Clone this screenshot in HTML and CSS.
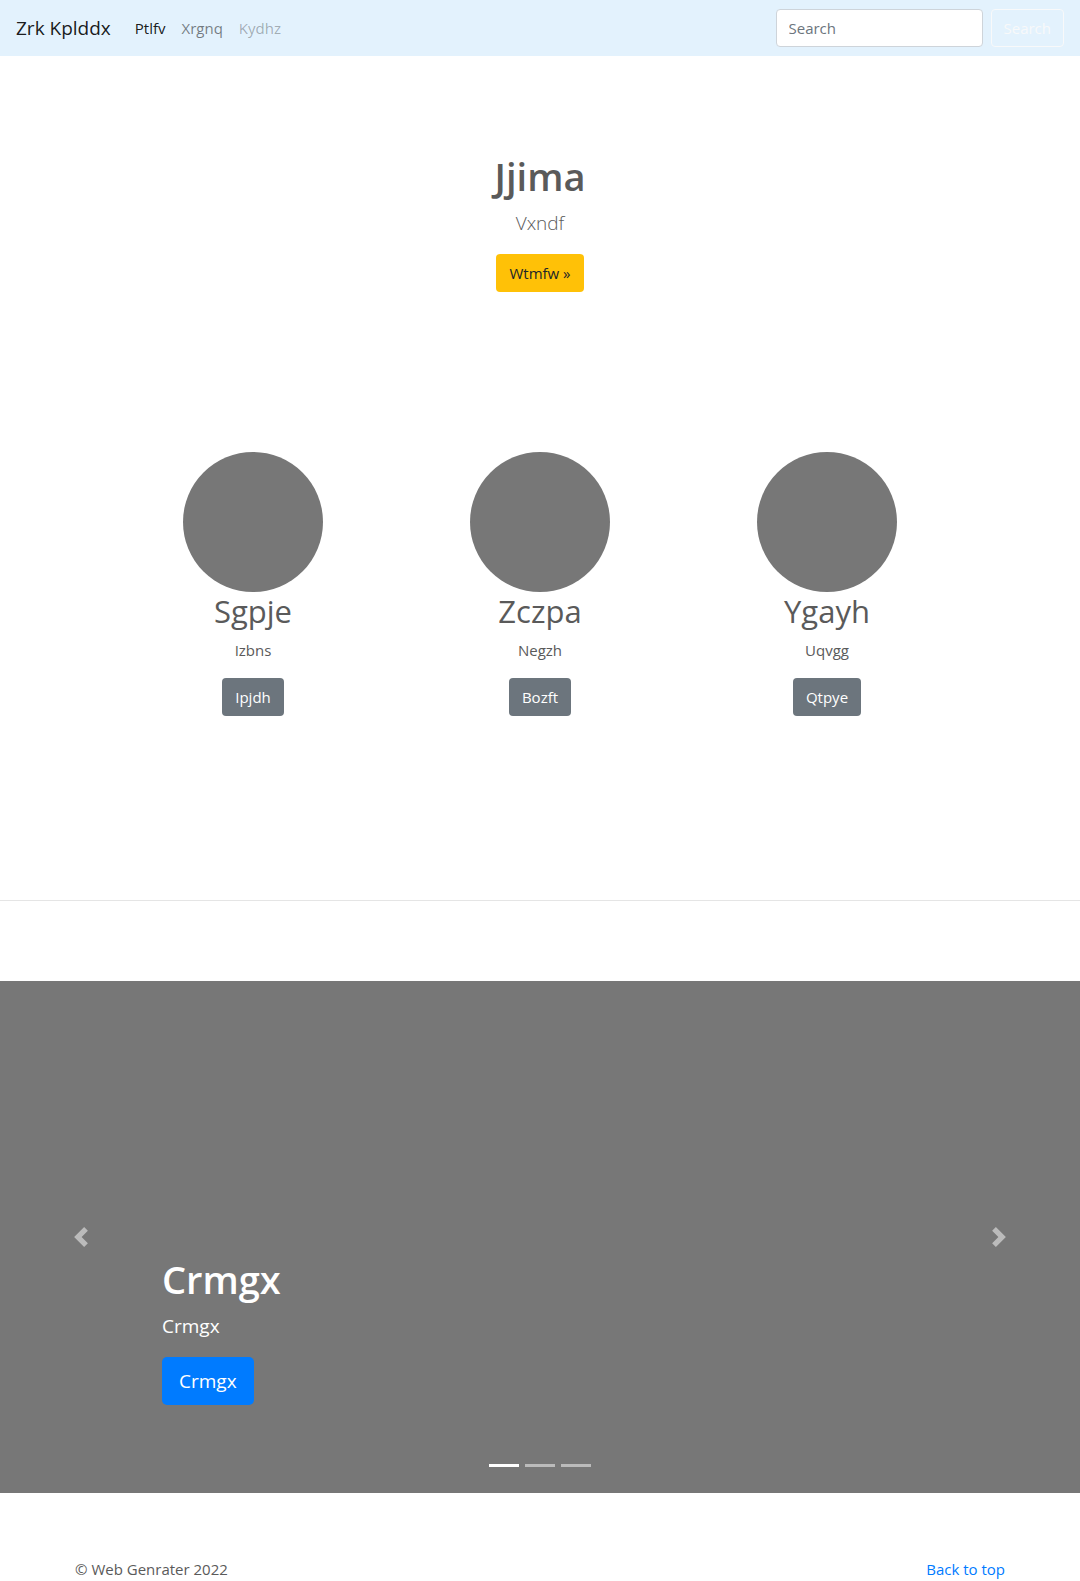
FILE: index.html
```html
<!DOCTYPE html>
<html lang="en">
<head>
<meta charset="utf-8">
<meta name="viewport" content="width=device-width, initial-scale=1">
<title>Zrk Kplddx</title>
<link rel="stylesheet" href="styles.css">
</head>
<body>
<header class="navbar">
  <a class="brand" href="#">Zrk Kplddx</a>
  <nav class="nav-links">
    <a class="nav-link active" href="#">Ptlfv</a>
    <a class="nav-link" href="#">Xrgnq</a>
    <a class="nav-link disabled" href="#">Kydhz</a>
  </nav>
  <form class="search">
    <input class="search-input" type="search" placeholder="Search" aria-label="Search">
    <button class="btn btn-outline" type="button">Search</button>
  </form>
</header>
<main>
  <section class="hero">
    <h1 class="title">Jjima</h1>
    <p class="lead light">Vxndf</p>
    <a class="btn btn-warning" href="#">Wtmfw »</a>
  </section>
  <section class="features">
    <article class="feature">
      <div class="avatar"></div>
      <h2 class="feature-title">Sgpje</h2>
      <p class="feature-text">Izbns</p>
      <a class="btn btn-secondary" href="#">Ipjdh</a>
    </article>
    <article class="feature">
      <div class="avatar"></div>
      <h2 class="feature-title">Zczpa</h2>
      <p class="feature-text">Negzh</p>
      <a class="btn btn-secondary" href="#">Bozft</a>
    </article>
    <article class="feature">
      <div class="avatar"></div>
      <h2 class="feature-title">Ygayh</h2>
      <p class="feature-text">Uqvgg</p>
      <a class="btn btn-secondary" href="#">Qtpye</a>
    </article>
  </section>
  <hr class="divider">
  <section class="carousel">
    <button class="arrow" type="button" aria-label="Previous">
      <svg width="20" height="20" viewBox="0 0 8 8" fill="#fff"><path d="M5.25 0l-4 4 4 4 1.5-1.5L4.25 4l2.5-2.5L5.25 0z"/></svg>
    </button>
    <div class="caption">
      <h1 class="title">Crmgx</h1>
      <p class="lead">Crmgx</p>
      <a class="btn btn-primary" href="#">Crmgx</a>
    </div>
    <button class="arrow" type="button" aria-label="Next">
      <svg width="20" height="20" viewBox="0 0 8 8" fill="#fff"><path d="M2.75 0l-1.5 1.5L3.75 4l-2.5 2.5L2.75 8l4-4-4-4z"/></svg>
    </button>
    <div class="indicators">
      <button class="indicator current" type="button" aria-label="Slide 1"></button>
      <button class="indicator" type="button" aria-label="Slide 2"></button>
      <button class="indicator" type="button" aria-label="Slide 3"></button>
    </div>
  </section>
</main>
<footer class="footer">
  <span>© Web Genrater 2022</span>
  <a class="top-link" href="#">Back to top</a>
</footer>
</body>
</html>
```
FILE: styles.css
```css
*, *::before, *::after { box-sizing: border-box; }

body {
  margin: 0;
  font-family: "Open Sans", "Noto Sans", sans-serif;
  font-size: 15px;
  line-height: 24px;
  color: #5a5a5a;
  background: #fff;
}

h1, h2, p { margin: 0; }
a { text-decoration: none; }

.navbar {
  display: flex;
  align-items: center;
  min-height: 56px;
  padding: 8px 16px;
  background: #e3f2fd;
}
.brand {
  margin-right: 16px;
  font-size: 19px;
  line-height: 30px;
  color: rgba(0, 0, 0, .9);
}
.nav-links { display: flex; flex: 1; }
.nav-link { padding: 8px; color: rgba(0, 0, 0, .5); }
.nav-link.active { color: rgba(0, 0, 0, .9); }
.nav-link.disabled { color: rgba(0, 0, 0, .3); }
.search { display: flex; gap: 8px; }
.search-input {
  width: 207px;
  height: 38px;
  padding: 6px 12px;
  border: 1px solid #ced4da;
  border-radius: 4px;
  background: #fff;
  font: inherit;
  color: #495057;
}
.search-input::placeholder { color: #6c757d; opacity: 1; }

.btn {
  display: inline-block;
  padding: 6px 12px;
  border: 1px solid transparent;
  border-radius: 4px;
  font: inherit;
  text-align: center;
}
.btn-outline { color: #f8f9fa; border-color: #f8f9fa; background: transparent; }
.btn-warning { color: #212529; background: #ffc107; }
.btn-secondary { color: #fff; background: #6c757d; }
.btn-primary {
  padding: 8px 16px;
  border-radius: 5px;
  font-size: 19px;
  line-height: 30px;
  color: #fff;
  background: #007bff;
}

.title {
  margin-bottom: 8px;
  font-size: 38px;
  font-weight: 600;
  line-height: 48px;
}
.lead { margin-bottom: 16px; font-size: 19px; line-height: 30px; }
.light { font-weight: 300; }

.hero { padding: 96px 16px 160px; text-align: center; }

.features {
  display: grid;
  grid-template-columns: repeat(3, 1fr);
  max-width: 861px;
  margin: 0 auto;
  text-align: center;
}
.avatar {
  width: 140px;
  height: 140px;
  margin: 0 auto;
  border-radius: 50%;
  background: #777;
}
.feature-title {
  margin-bottom: 8px;
  font-size: 31px;
  font-weight: 400;
  line-height: 38px;
}
.feature-text { margin-bottom: 16px; }

.divider {
  margin: 184px 0 80px;
  border: 0;
  border-top: 1px solid rgba(0, 0, 0, .1);
}

.carousel {
  position: relative;
  display: flex;
  min-height: 512px;
  color: #fff;
  background: #777;
}
.arrow {
  display: flex;
  align-items: center;
  justify-content: center;
  width: 15%;
  padding: 0;
  border: 0;
  background: none;
  opacity: .5;
}
.caption { flex: 1; align-self: flex-end; padding-bottom: 88px; }
.indicators {
  position: absolute;
  right: 0;
  bottom: 26px;
  left: 0;
  display: flex;
  justify-content: center;
  gap: 6px;
}
.indicator {
  width: 30px;
  height: 3px;
  padding: 0;
  border: 0;
  background: #fff;
  opacity: .5;
}
.indicator.current { opacity: 1; }

.footer {
  display: flex;
  justify-content: space-between;
  max-width: 960px;
  margin: 0 auto;
  padding: 64px 15px 0;
}
.top-link { color: #007bff; }
```
